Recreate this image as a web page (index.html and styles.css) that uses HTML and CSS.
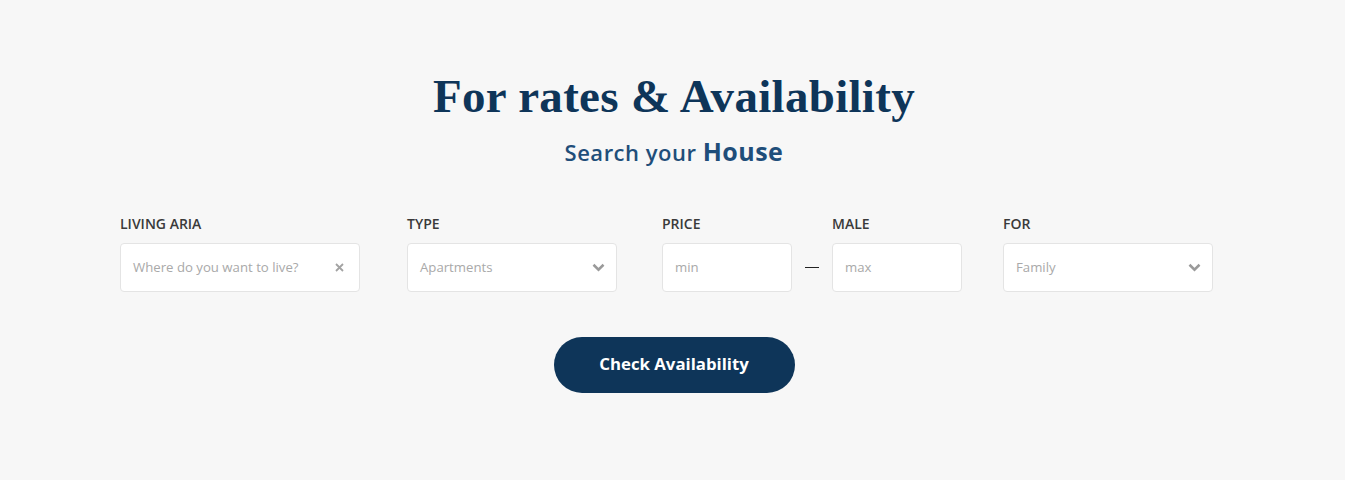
FILE: index.html
```html
<!DOCTYPE html>
<html lang="en">
<head>
<meta charset="utf-8">
<title>For rates &amp; Availability</title>
<link rel="stylesheet" href="styles.css">
</head>
<body>
<section class="search">
  <h1 class="title">For rates &amp; Availability</h1>
  <p class="subtitle">Search your <strong>House</strong></p>
  <form class="fields">
    <div class="field field-area">
      <label class="label">LIVING ARIA</label>
      <div class="box">
        <span class="ph">Where do you want to live?</span>
        <svg class="icon-x" width="9" height="9" viewBox="0 0 9 9"><path d="M1 1L8 8M8 1L1 8" stroke="#a3a3a3" stroke-width="1.8" fill="none"/></svg>
      </div>
    </div>
    <div class="field field-type">
      <label class="label">TYPE</label>
      <div class="box">
        <span class="ph">Apartments</span>
        <svg class="icon-chev" width="13" height="9" viewBox="0 0 13 9"><path d="M1.5 1.8L6.5 6.6L11.5 1.8" stroke="#9a9a9a" stroke-width="2.6" fill="none"/></svg>
      </div>
    </div>
    <div class="field field-price">
      <label class="label">PRICE</label>
      <div class="box"><span class="ph">min</span></div>
    </div>
    <div class="dash"></div>
    <div class="field field-male">
      <label class="label">MALE</label>
      <div class="box"><span class="ph">max</span></div>
    </div>
    <div class="field field-for">
      <label class="label">FOR</label>
      <div class="box">
        <span class="ph">Family</span>
        <svg class="icon-chev" width="13" height="9" viewBox="0 0 13 9"><path d="M1.5 1.8L6.5 6.6L11.5 1.8" stroke="#9a9a9a" stroke-width="2.6" fill="none"/></svg>
      </div>
    </div>
  </form>
  <div class="actions">
    <button type="button" class="btn">Check Availability</button>
  </div>
</section>
</body>
</html>
```
FILE: styles.css
```css
html, body {
  margin: 0;
  padding: 0;
  background: #f7f7f7;
}
body {
  font-family: "Open Sans", "Liberation Sans", sans-serif;
}
.search {
  padding-top: 66px;
  display: flex;
  flex-direction: column;
  align-items: center;
}
.title {
  margin: 0;
  font-family: "Liberation Serif", "DejaVu Serif", serif;
  font-weight: 700;
  font-size: 47px;
  line-height: 60px;
  color: #0e3559;
  letter-spacing: 0.3px;
  padding-left: 3px;
}
.subtitle {
  margin: 10px 0 0;
  font-family: "Open Sans", sans-serif;
  font-weight: 600;
  font-size: 22px;
  line-height: 30px;
  color: #1f4e7a;
  letter-spacing: 0.5px;
  padding-left: 3px;
}
.subtitle strong {
  font-weight: 700;
  font-size: 25px;
}
.fields {
  align-self: flex-start;
  margin: 48px 0 0 120px;
  display: flex;
  align-items: flex-end;
}
.field {
  display: flex;
  flex-direction: column;
}
.label {
  font-family: "Open Sans", sans-serif;
  font-weight: 600;
  font-size: 14px;
  line-height: 18px;
  color: #3a3a3a;
  margin-bottom: 10px;
}
.box {
  box-sizing: border-box;
  height: 49px;
  background: #fff;
  border: 1px solid #e4e4e4;
  border-radius: 4px;
  display: flex;
  align-items: center;
  justify-content: space-between;
  padding: 0 11px 2px 12px;
}
.icon-chev, .icon-x { margin-top: 2px; }
.ph {
  font-family: "Open Sans", sans-serif;
  font-size: 13.2px;
  color: #a9a9a9;
}
.field-area { width: 240px; }
.field-type { width: 210px; margin-left: 47px; }
.field-price { width: 130px; margin-left: 45px; }
.dash {
  width: 14px;
  height: 1px;
  background: #222;
  margin: 0 13px 24px 13px;
}
.field-male { width: 130px; }
.field-for { width: 210px; margin-left: 41px; }
.icon-x { margin-right: 4px; }
.actions {
  margin-top: 45px;
  display: flex;
  justify-content: center;
  padding-left: 3px;
}
.btn {
  width: 241px;
  height: 56px;
  border: none;
  border-radius: 28px;
  background: #0e3559;
  color: #fff;
  font-family: "Open Sans", sans-serif;
  font-weight: 700;
  font-size: 16.8px;
  padding: 0 0 3px;
  cursor: pointer;
}
```
